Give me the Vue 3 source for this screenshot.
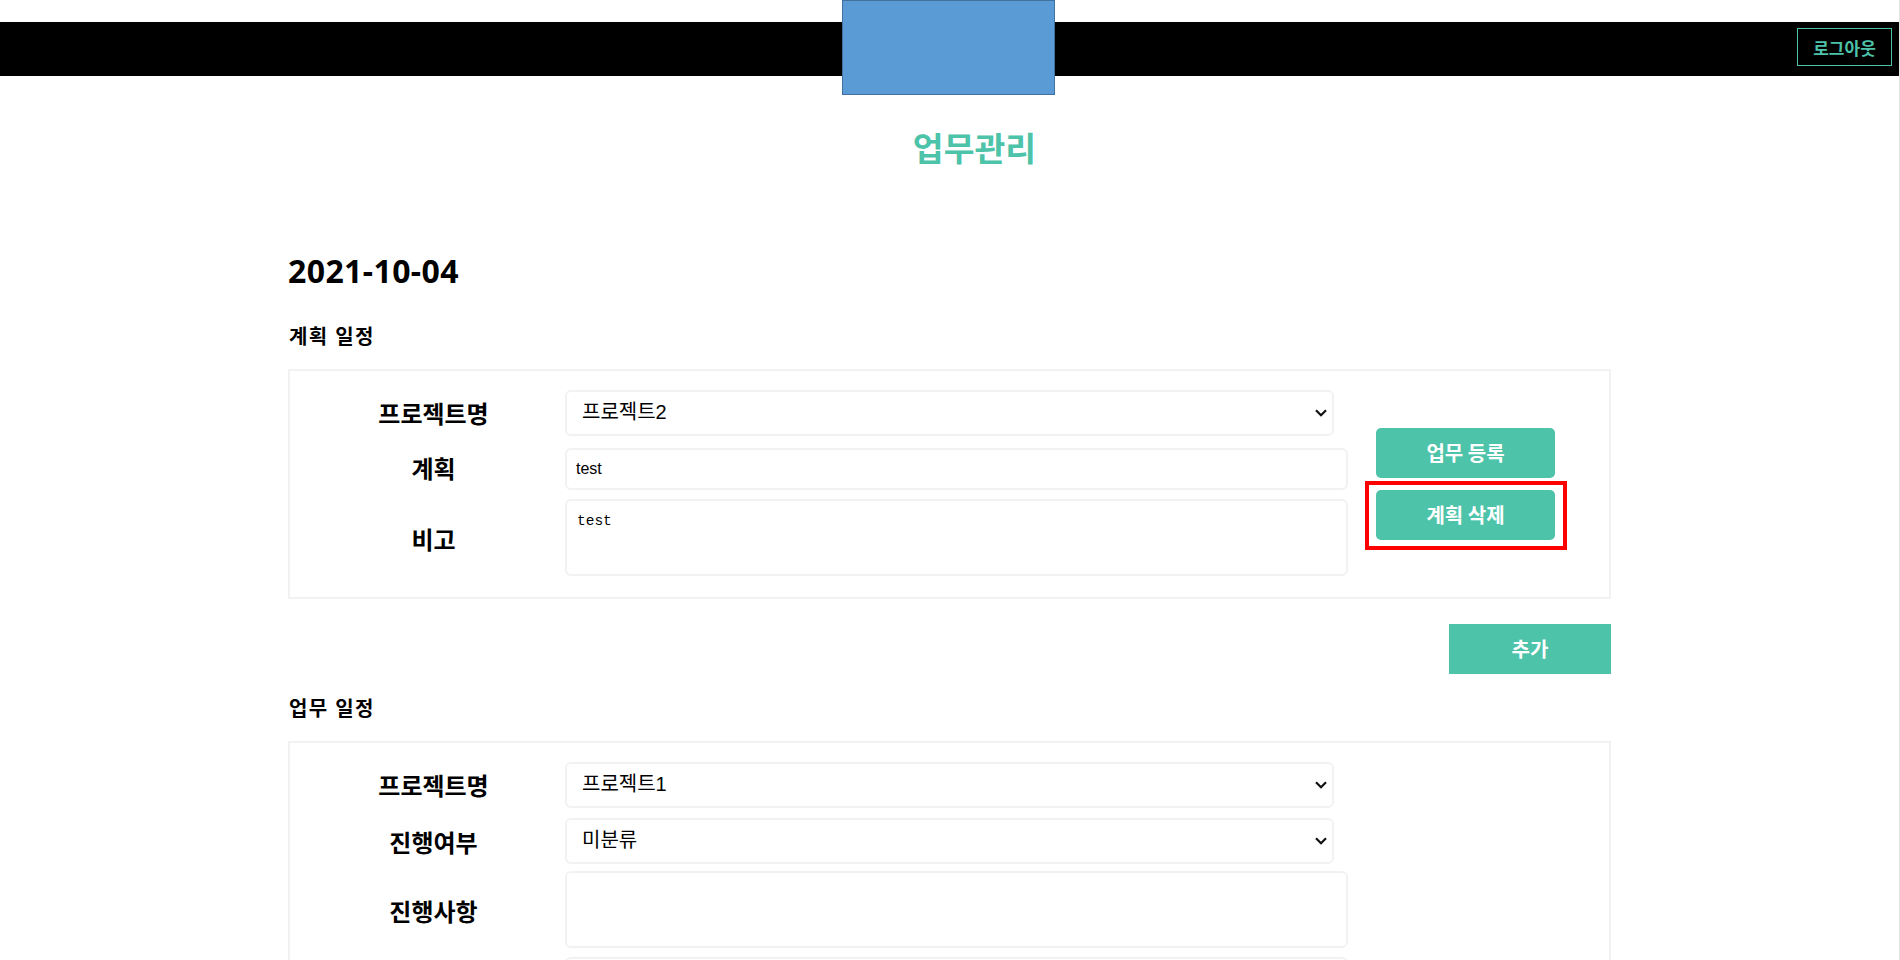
<script setup>
import { ref } from 'vue'

const planProject = ref('프로젝트2')
const workProject = ref('프로젝트1')
const workState = ref('미분류')
const projects = ['프로젝트1', '프로젝트2']
const states = ['미분류', '진행중', '완료']
</script>

<template>
  <div class="page">
    <header class="topbar">
      <div class="logo"></div>
      <button class="logout">로그아웃</button>
    </header>

    <h1 class="title">업무관리</h1>

    <main class="content">
      <h2 class="date">2021-10-04</h2>

      <h3 class="section-title plan-title">계획 일정</h3>
      <section class="box">
        <div class="fields">
          <div class="row row-first">
            <label class="label">프로젝트명</label>
            <div class="select-wrap">
              <select v-model="planProject" class="control select">
                <option v-for="p in projects" :key="p">{{ p }}</option>
              </select>
              <svg class="chevron" width="12" height="8" viewBox="0 0 12 8"><path d="M1 1.2 6 6.2 11 1.2" fill="none" stroke="#111" stroke-width="2.2" /></svg>
            </div>
          </div>
          <div class="row row-input">
            <label class="label">계획</label>
            <input class="control input" value="test" />
          </div>
          <div class="row row-area">
            <label class="label">비고</label>
            <textarea class="control area">test</textarea>
          </div>
        </div>
        <div class="actions">
          <button class="action">업무 등록</button>
          <div class="marked">
            <button class="action">계획 삭제</button>
            <span class="highlight"></span>
          </div>
        </div>
      </section>

      <div class="add-line">
        <button class="add">추가</button>
      </div>

      <h3 class="section-title work-title">업무 일정</h3>
      <section class="box">
        <div class="fields">
          <div class="row row-first">
            <label class="label">프로젝트명</label>
            <div class="select-wrap">
              <select v-model="workProject" class="control select">
                <option v-for="p in projects" :key="p">{{ p }}</option>
              </select>
              <svg class="chevron" width="12" height="8" viewBox="0 0 12 8"><path d="M1 1.2 6 6.2 11 1.2" fill="none" stroke="#111" stroke-width="2.2" /></svg>
            </div>
          </div>
          <div class="row row-state">
            <label class="label">진행여부</label>
            <div class="select-wrap">
              <select v-model="workState" class="control select">
                <option v-for="s in states" :key="s">{{ s }}</option>
              </select>
              <svg class="chevron" width="12" height="8" viewBox="0 0 12 8"><path d="M1 1.2 6 6.2 11 1.2" fill="none" stroke="#111" stroke-width="2.2" /></svg>
            </div>
          </div>
          <div class="row row-progress">
            <label class="label">진행사항</label>
            <textarea class="control area"></textarea>
          </div>
          <div class="row row-next">
            <span class="label"></span>
            <textarea class="control area"></textarea>
          </div>
        </div>
      </section>
    </main>
  </div>
</template>

<style>
html, body { margin: 0; height: 960px; overflow: hidden; background: #fff; }
</style>

<style scoped>
.page {
  height: 960px;
  overflow: hidden;
  box-sizing: border-box;
  padding-top: 22px;
  border-right: 1px solid #e4e4e4;
  font-family: "Noto Sans", "Noto Sans CJK KR", sans-serif;
  color: #000;
}

.topbar {
  position: relative;
  height: 54px;
  margin-right: -1px;
  background: #000;
  display: flex;
  align-items: center;
  justify-content: flex-end;
  padding-right: 8px;
}

.logo {
  position: absolute;
  left: 842px;
  top: -22px;
  width: 213px;
  height: 95px;
  box-sizing: border-box;
  background: #5b9bd5;
  border: 1px solid #41719c;
}

.logout {
  width: 95px;
  height: 38px;
  margin-top: -4px;
  padding: 0;
  background: #000;
  border: 1px solid #4dc3a9;
  color: #4dc3a9;
  font: 700 17px "Noto Sans CJK KR", sans-serif;
}

.title {
  margin: 47px 0 0 -1px;
  padding-left: 51px;
  text-align: center;
  font-size: 33.5px;
  line-height: 50px;
  font-weight: 700;
  color: #4dc3a9;
}

.content {
  width: 1323px;
  margin-left: 288px;
}

.date {
  margin: 76px 0 0 0;
  font-size: 32px;
  line-height: 44px;
  font-weight: 700;
  letter-spacing: 0.4px;
}

.section-title {
  margin: 0 0 0 1px;
  font-size: 20px;
  line-height: 28px;
  font-weight: 700;
  letter-spacing: 1.4px;
}
.plan-title { margin-top: 30px; margin-bottom: 18px; }
.work-title { margin-top: 21px; margin-bottom: 18px; }

.box {
  display: flex;
  align-items: center;
  box-sizing: border-box;
  border: 2px solid #f2f2f2;
  padding: 19px 0 21px;
}

.fields {
  width: 1058px;
  flex: none;
  display: flex;
  flex-direction: column;
}

.row {
  display: flex;
  align-items: center;
}
.row-first .label { margin-bottom: 2px; }
.row-input { margin-top: 12px; }
.row-input .label { margin-bottom: 4px; }
.row-area { margin-top: 9px; }
.row-area .label { margin-top: 2px; }
.row-state { margin-top: 10px; }
.row-progress { margin-top: 7px; }
.row-progress .label { margin-top: 2px; }
.row-next { margin-top: 9px; }

.label {
  width: 263px;
  flex: none;
  margin-left: 12px;
  text-align: center;
  font-size: 24px;
  font-weight: 700;
}

.control {
  box-sizing: border-box;
  border: 2px solid #f2f2f2;
  border-radius: 6px;
  background: #fff;
  color: #000;
  outline: none;
}

.select-wrap {
  position: relative;
  width: 769px;
}

.select {
  display: block;
  width: 100%;
  height: 46px;
  padding: 0 15px 2px;
  appearance: none;
  font: 20px "Liberation Sans", "Noto Sans CJK KR", sans-serif;
}

.chevron {
  position: absolute;
  left: 750px;
  top: 19px;
  pointer-events: none;
}

.input {
  width: 783px;
  height: 42px;
  padding: 0 9px;
  font: 16px "Liberation Sans", sans-serif;
}

.area {
  display: block;
  width: 783px;
  height: 77px;
  padding: 12px 10px;
  resize: none;
  font: 14.5px "Liberation Mono", monospace;
}

.actions {
  margin-top: 2px;
  margin-left: 28px;
  display: flex;
  flex-direction: column;
  gap: 12px;
}

.action {
  display: block;
  width: 179px;
  height: 50px;
  padding: 0 0 2px;
  border: none;
  border-radius: 5px;
  background: #4dc3a9;
  color: #fff;
  font: 700 20px "Noto Sans CJK KR", sans-serif;
}

.marked { position: relative; }

.highlight {
  position: absolute;
  left: -11px;
  top: -9px;
  width: 202px;
  height: 69px;
  box-sizing: border-box;
  border: 4px solid #f00;
}

.add-line {
  display: flex;
  justify-content: flex-end;
  margin-top: 25px;
}

.add {
  width: 162px;
  height: 50px;
  padding: 0 0 2px;
  border: none;
  background: #4dc3a9;
  color: #fff;
  font: 700 20px "Noto Sans CJK KR", sans-serif;
}
</style>
